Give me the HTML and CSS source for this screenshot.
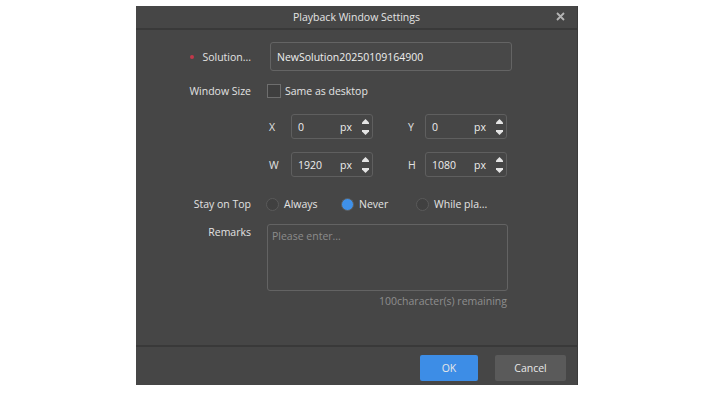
FILE: index.html
```html
<!DOCTYPE html>
<html lang="en">
<head>
    <meta charset="UTF-8">
    <meta name="viewport" content="width=device-width, initial-scale=1.0">
    <title>Playback Window Settings</title>
    <link rel="stylesheet" href="styles.css">
</head>
<body>
    <div class="dialog">
        <header class="title-bar">
            <span class="title">Playback Window Settings</span>
            <span class="close">
                <svg width="9" height="9" viewBox="0 0 9 9"><path d="M1 1L8 8M8 1L1 8" stroke="#b4b4b4" stroke-width="1.8"/></svg>
            </span>
        </header>

        <section class="content">
            <div class="row row-name">
                <label class="label"><span class="required"></span>Solution...</label>
                <div class="text-input">NewSolution20250109164900</div>
            </div>

            <div class="row row-size">
                <label class="label">Window Size</label>
                <span class="checkbox"></span>
                <span class="check-text">Same as desktop</span>
            </div>

            <div class="spin-grid">
                <div class="spin-row">
                    <span class="spin-label">X</span>
                    <div class="spin"><span class="val">0</span><span class="unit">px</span><span class="arrows"><svg width="7" height="5" viewBox="0 0 7 5"><path d="M3.5 0L7 3.5V5H0V3.5Z" fill="#e4e4e4"/></svg><svg width="7" height="5" viewBox="0 0 7 5"><path d="M0 0H7V1.5L3.5 5L0 1.5Z" fill="#e4e4e4"/></svg></span></div>
                    <span class="spin-label second">Y</span>
                    <div class="spin"><span class="val">0</span><span class="unit">px</span><span class="arrows"><svg width="7" height="5" viewBox="0 0 7 5"><path d="M3.5 0L7 3.5V5H0V3.5Z" fill="#e4e4e4"/></svg><svg width="7" height="5" viewBox="0 0 7 5"><path d="M0 0H7V1.5L3.5 5L0 1.5Z" fill="#e4e4e4"/></svg></span></div>
                </div>
                <div class="spin-row">
                    <span class="spin-label">W</span>
                    <div class="spin"><span class="val">1920</span><span class="unit">px</span><span class="arrows"><svg width="7" height="5" viewBox="0 0 7 5"><path d="M3.5 0L7 3.5V5H0V3.5Z" fill="#e4e4e4"/></svg><svg width="7" height="5" viewBox="0 0 7 5"><path d="M0 0H7V1.5L3.5 5L0 1.5Z" fill="#e4e4e4"/></svg></span></div>
                    <span class="spin-label second">H</span>
                    <div class="spin"><span class="val">1080</span><span class="unit">px</span><span class="arrows"><svg width="7" height="5" viewBox="0 0 7 5"><path d="M3.5 0L7 3.5V5H0V3.5Z" fill="#e4e4e4"/></svg><svg width="7" height="5" viewBox="0 0 7 5"><path d="M0 0H7V1.5L3.5 5L0 1.5Z" fill="#e4e4e4"/></svg></span></div>
                </div>
            </div>

            <div class="row row-top">
                <label class="label">Stay on Top</label>
                <div class="radios">
                    <span class="radio-item"><span class="radio"></span>Always</span>
                    <span class="radio-item"><span class="radio checked"></span>Never</span>
                    <span class="radio-item"><span class="radio"></span>While pla...</span>
                </div>
            </div>

            <div class="row row-remarks">
                <label class="label">Remarks</label>
                <div class="textarea">Please enter...</div>
            </div>
            <div class="hint">100character(s) remaining</div>
        </section>

        <footer class="footer">
            <button class="btn btn-ok">OK</button>
            <button class="btn btn-cancel">Cancel</button>
        </footer>
    </div>
</body>
</html>
```

FILE: styles.css
```css
body {
    margin: 0;
    padding: 0;
    background: #fff;
    font-family: "Open Sans", "Noto Sans", sans-serif;
    font-size: 10.5px;
    color: #e2e2e2;
}
.dialog {
    margin: 6px 0 0 136px;
    width: 441px;
    height: 379px;
    background: #464646;
    border-right: 1px solid #3b3b3b;
    display: flex;
    flex-direction: column;
}
.title-bar {
    height: 22px;
    border-bottom: 2px solid #393939;
    display: flex;
    align-items: center;
    justify-content: center;
    position: relative;
}
.title {
    color: #e4e4e4;
}
.close {
    position: absolute;
    right: 12px;
    top: 6px;
    display: flex;
}
.content {
    flex: 1;
    padding-top: 12px;
}
.row {
    display: flex;
    align-items: center;
}
.label {
    width: 115px;
    text-align: right;
    margin-right: 16px;
    flex-shrink: 0;
    display: flex;
    justify-content: flex-end;
    align-items: center;
}
.required {
    width: 4px;
    height: 4px;
    border-radius: 50%;
    background: #c2384a;
    margin-right: 8px;
}
.text-input {
    margin-left: 3px;
    width: 234px;
    height: 27px;
    border: 1px solid #646464;
    border-radius: 3px;
    background: #484848;
    display: flex;
    align-items: center;
    padding-left: 6px;
    color: #eee;
}
.row-size {
    margin-top: 10px;
    height: 20px;
}
.checkbox {
    width: 12px;
    height: 12px;
    border: 1px solid #6e6e6e;
    background: #3f3f3f;
    margin-right: 4px;
}
.check-text {
    color: #e4e4e4;
}
.spin-grid {
    margin-top: 13px;
    padding-left: 131px;
    display: flex;
    flex-direction: column;
    gap: 13px;
}
.spin-row {
    display: flex;
    align-items: center;
}
.spin-label {
    width: 24px;
    padding-left: 2px;
    box-sizing: border-box;
}
.spin-label.second {
    width: 52px;
    padding-left: 35px;
}
.spin {
    width: 82px;
    height: 25px;
    box-sizing: border-box;
    border: 1px solid #5f5f5f;
    border-radius: 3px;
    display: flex;
    align-items: center;
    padding-left: 6px;
    color: #eee;
}
.val {
    width: 42px;
}
.unit {
    width: 22px;
}
.arrows {
    display: flex;
    flex-direction: column;
    gap: 6px;
    margin-top: 1px;
}
.arrows svg {
    display: block;
}
.row-top {
    margin-top: 17px;
    height: 20px;
}
.radios {
    display: flex;
    align-items: center;
    margin-left: -1px;
}
.radio-item {
    display: flex;
    align-items: center;
    width: 75px;
    color: #e4e4e4;
}
.radio {
    width: 11px;
    height: 11px;
    border-radius: 50%;
    border: 1px solid #5a5a5a;
    background: #404040;
    margin-right: 5px;
}
.radio.checked {
    background: #3f91ea;
    border-color: #5c5c5c;
}
.row-remarks {
    margin-top: 10px;
    align-items: flex-start;
}
.row-remarks .label {
    margin-top: 1px;
}
.textarea {
    width: 231px;
    height: 61px;
    border: 1px solid #636363;
    border-radius: 3px;
    padding: 4px 4px 0;
    color: #8c8c8c;
}
.hint {
    margin-top: 3px;
    width: 371px;
    text-align: right;
    color: #8e8e8e;
}
.footer {
    height: 40px;
    border-top: 2px solid #393939;
    display: flex;
    justify-content: flex-end;
    align-items: flex-start;
    padding: 8px 11px 0 0;
    box-sizing: border-box;
    gap: 17px;
}
.btn {
    height: 26px;
    border: none;
    border-radius: 2px;
    font-family: "Open Sans", "Noto Sans", sans-serif;
    font-size: 10.5px;
    color: #e8e8e8;
    cursor: pointer;
}
.btn-ok {
    width: 58px;
    background: #3d8de6;
}
.btn-cancel {
    width: 71px;
    background: #5a5a5a;
}
```
